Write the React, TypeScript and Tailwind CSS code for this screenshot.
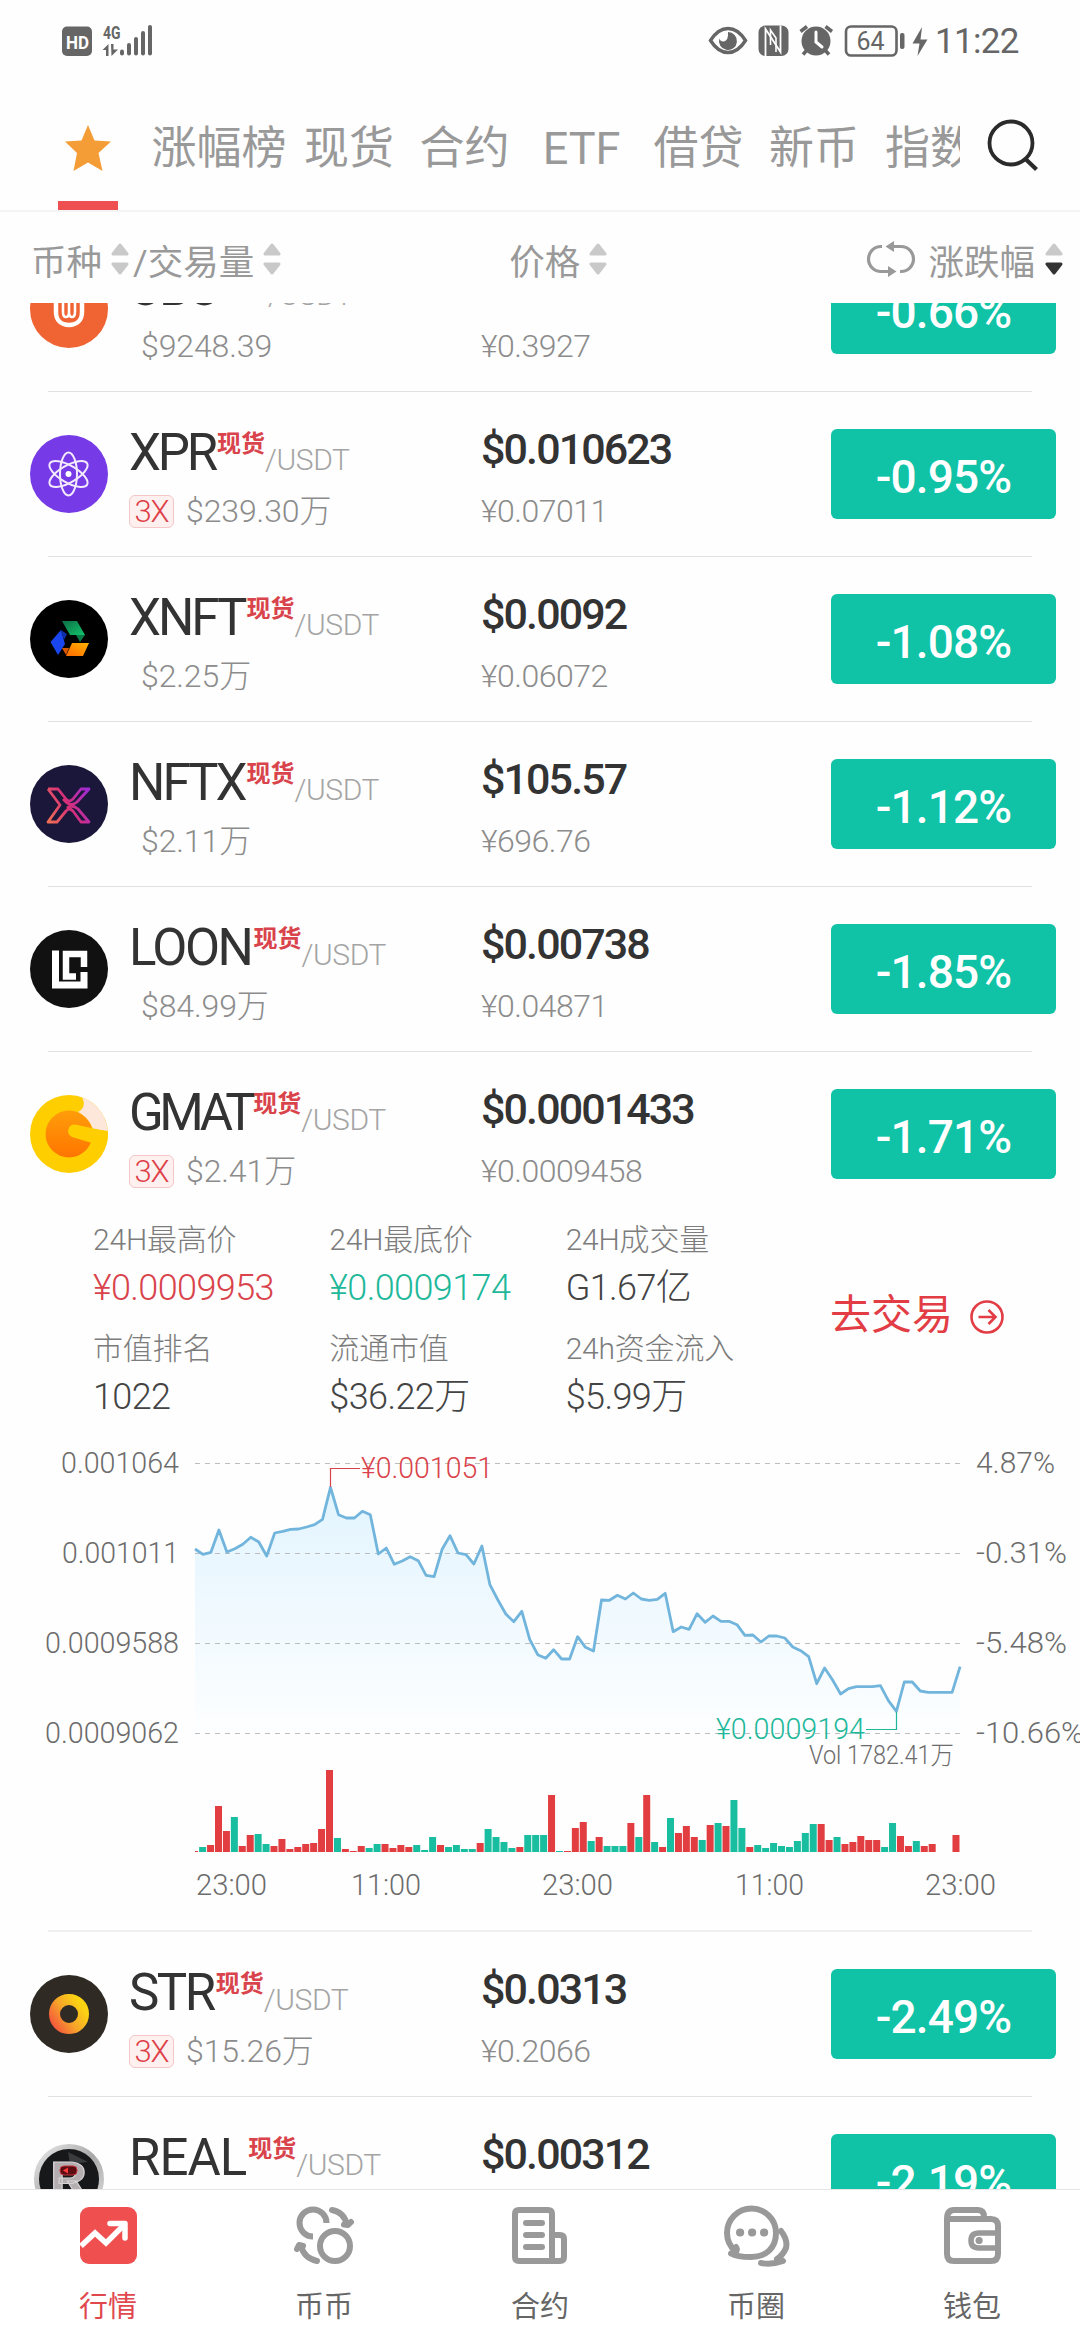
import type { ReactNode } from "react";

const coins = [
  { name: "UBU", fit: "tracking-[-3px]", logo: "ubu", vol: "$9248.39", price: "$0.0581", cny: "¥0.3927", change: "-0.66%" },
  { name: "XPR", fit: "tracking-[-3.2px]", logo: "xpr", lever: true, vol: "$239.30万", price: "$0.010623", cny: "¥0.07011", change: "-0.95%" },
  { name: "XNFT", fit: "tracking-[-3px]", logo: "xnft", vol: "$2.25万", price: "$0.0092", cny: "¥0.06072", change: "-1.08%" },
  { name: "NFTX", fit: "tracking-[-3px]", logo: "nftx", vol: "$2.11万", price: "$105.57", cny: "¥696.76", change: "-1.12%" },
  { name: "LOON", fit: "tracking-[-2.5px]", logo: "loon", vol: "$84.99万", price: "$0.00738", cny: "¥0.04871", change: "-1.85%" },
  { name: "GMAT", fit: "tracking-[-4.5px]", logo: "gmat", lever: true, open: true, vol: "$2.41万", price: "$0.0001433", cny: "¥0.0009458", change: "-1.71%" },
  { name: "STR", fit: "tracking-[-2.5px]", logo: "str", lever: true, vol: "$15.26万", price: "$0.0313", cny: "¥0.2066", change: "-2.49%" },
  { name: "REAL", fit: "tracking-[-1px]", logo: "real", vol: "$1.08万", price: "$0.00312", cny: "¥0.0206", change: "-2.19%" },
];

const stats = [
  { label: "24H最高价", value: "¥0.0009953", color: "text-[#d9434b]" },
  { label: "24H最底价", value: "¥0.0009174", color: "text-[#1fb89a]" },
  { label: "24H成交量", value: "G1.67亿", color: "text-[#444]" },
  { label: "市值排名", value: "1022", color: "text-[#444]" },
  { label: "流通市值", value: "$36.22万", color: "text-[#444]" },
  { label: "24h资金流入", value: "$5.99万", color: "text-[#444]" },
];

// distance of each price point below the top of the chart, in thirds of a pixel
const prices = [
  357, 373, 367, 300, 366, 356, 343, 322, 336, 378, 309, 304, 298, 297, 291, 284, 268, 172, 254, 264, 264, 244, 254, 372,
  354, 403, 393, 380, 392, 436, 440, 358, 317, 369, 374, 402, 348, 464, 510, 552, 575, 544, 628, 674, 685, 659, 687, 687,
  620, 652, 663, 510, 511, 496, 507, 489, 507, 511, 508, 490, 605, 591, 598, 551, 577, 558, 574, 574, 584, 616, 615, 636,
  618, 618, 624, 651, 662, 680, 761, 714, 750, 792, 776, 770, 770, 770, 767, 812, 844, 756, 756, 783, 787, 787, 787, 787,
  710,
];

// r = up, g = down, number is the height of the bar
const volumes =
  "r1 g5 r7 r46 r21 g35 r6 r17 g18 g8 r6 r13 r3 r5 r8 r9 r23 r82 g14 r3 r1 r6 g4 g8 r8 r4 r7 r5 g7 g2 g15 r7 g5 g7 g3 g3 r9 g23 g15 g10 g4 r5 g17 g17 g17 r57 g1 r1 r24 r30 g11 r15 g6 g6 g6 r29 g15 r57 g10 r5 g34 r19 r26 r15 g12 r27 g29 r26 g52 g24 r5 g7 g4 g9 g6 g5 g11 g19 g28 r28 r12 g15 r8 r10 r16 r12 r12 g5 g29 r16 r6 g11 r6 r8 r0 r0 r17".split(
    " "
  );

const gridRows = [
  { y: 1463.5, left: "0.001064", lw: 118, right: "4.87%", rw: 79 },
  { y: 1553.5, left: "0.001011", lw: 117, right: "-0.31%", rw: 91 },
  { y: 1643.5, left: "0.0009588", lw: 134, right: "-5.48%", rw: 91 },
  { y: 1733.5, left: "0.0009062", lw: 134, right: "-10.66%", rw: 108 },
];

const times = [
  { x: 196, w: 71, t: "23:00" },
  { x: 351, w: 70, t: "11:00" },
  { x: 542, w: 71, t: "23:00" },
  { x: 735, w: 69, t: "11:00" },
  { x: 925, w: 71, t: "23:00" },
];

function Logo({ kind }: { kind: string }) {
  const art: Record<string, ReactNode> = {
    ubu: (
      <>
        <circle cx="39" cy="39" r="39" fill="#ef6432" />
        <g fill="none" stroke="#fff">
          <path d="M26 18V42C26 50 31 55 39 55S52 50 52 42V18" strokeWidth="4.5" />
          <path d="M33 18V42Q33 47 36 47T39 42V18M39 42Q39 47 42 47T45 42V18" strokeWidth="2.6" />
        </g>
      </>
    ),
    xpr: (
      <>
        <circle cx="39" cy="39" r="39" fill="#763be6" />
        <g fill="none" stroke="#f3eafd" strokeWidth="2">
          <ellipse cx="38.5" cy="39" rx="8.5" ry="21.5" />
          <ellipse cx="38.5" cy="39" rx="8.5" ry="21.5" transform="rotate(60 38.5 39)" />
          <ellipse cx="38.5" cy="39" rx="8.5" ry="21.5" transform="rotate(-60 38.5 39)" />
        </g>
        <circle cx="38.5" cy="39" r="3" fill="#fff" />
      </>
    ),
    xnft: (
      <>
        <defs>
          <linearGradient id="xg" x1="0" y1="0" x2="1" y2="1">
            <stop offset="0" stopColor="#0d6e45" />
            <stop offset="1" stopColor="#12c46c" />
          </linearGradient>
          <linearGradient id="xo" x1="1" y1="0" x2="0" y2="1">
            <stop offset="0" stopColor="#ffb300" />
            <stop offset="1" stopColor="#ff6a00" />
          </linearGradient>
        </defs>
        <circle cx="39" cy="39" r="39" fill="#000" />
        <path d="M32 21H47L55 35H40Z" fill="url(#xg)" />
        <path d="M46 35H55L50 42Z" fill="#0a7a46" />
        <path d="M20.5 42L31 30L35 44L28 55Z" fill="#1a46f0" />
        <path d="M31 30L37 34L34 40Z" fill="#0d2fa8" />
        <path d="M42 43H59L53 56H36Z" fill="url(#xo)" />
        <path d="M32 48H39L36 55Z" fill="#d95700" />
      </>
    ),
    nftx: (
      <>
        <defs>
          <linearGradient id="nx" x1="17" y1="50" x2="59" y2="30" gradientUnits="userSpaceOnUse">
            <stop offset="0" stopColor="#ef6c55" />
            <stop offset=".5" stopColor="#d62f78" />
            <stop offset="1" stopColor="#a22bd0" />
          </linearGradient>
        </defs>
        <circle cx="39" cy="39" r="39" fill="#1b173b" />
        <path
          d="M18 24H28L36 34Q39 38 43 34L51 24H59L47 37Q41 42 36 37L33 34M18 24L30 40L18 57H27L36 46Q39 42 43 46L51 57H59L48 44Q42 39 37 43"
          fill="none"
          stroke="url(#nx)"
          strokeWidth="2.8"
          strokeLinejoin="round"
        />
      </>
    ),
    loon: (
      <>
        <circle cx="39" cy="39" r="39" fill="#111" />
        <path d="M25.5 20.5V55H54V42" fill="none" stroke="#fff" strokeWidth="7" />
        <path d="M46 46.5H36V24H54V37" fill="none" stroke="#fff" strokeWidth="6.5" />
      </>
    ),
    gmat: (
      <>
        <defs>
          <linearGradient id="gm" x1="0" y1="0" x2="0" y2="1">
            <stop offset="0" stopColor="#ff9d0a" />
            <stop offset="1" stopColor="#ff7500" />
          </linearGradient>
        </defs>
        <circle cx="39" cy="39" r="39" fill="#ffce00" />
        <path d="M52 2.2A39 39 0 0 1 77.7 36L63 34Q59 23 48 17Q57 12 52 2.2Z" fill="#fde6da" />
        <circle cx="39" cy="39" r="23.5" fill="url(#gm)" />
        <path d="M45 29.5L77.8 36.5Q78.5 44 76 51L62 48L42 42Q37 39 38.5 34T45 29.5Z" fill="#ffce00" />
      </>
    ),
    str: (
      <>
        <defs>
          <linearGradient id="st" x1="0" y1="1" x2="1" y2=".3">
            <stop offset="0" stopColor="#f4573c" />
            <stop offset=".5" stopColor="#f7a32a" />
            <stop offset="1" stopColor="#fbd313" />
          </linearGradient>
        </defs>
        <circle cx="39" cy="39" r="39" fill="#2f2a24" />
        <circle cx="39" cy="39" r="14.5" fill="none" stroke="url(#st)" strokeWidth="11" />
      </>
    ),
    real: (
      <>
        <defs>
          <linearGradient id="rl" x1="0" y1="0" x2="1" y2="1">
            <stop offset="0" stopColor="#e9e9e9" />
            <stop offset=".5" stopColor="#a8a8a8" />
            <stop offset="1" stopColor="#dedede" />
          </linearGradient>
        </defs>
        <circle cx="39" cy="39" r="32.5" fill="#171819" stroke="url(#rl)" strokeWidth="5" />
        <path d="M38 12L58 22L40 24Z" fill="#3a3b3d" />
        <text x="20" y="56" fontSize="48" fontWeight="700" fill="#b4aeb0" stroke="#d8d4d5" textLength="37" lengthAdjust="spacingAndGlyphs">
          R
        </text>
        <rect x="30" y="26" width="17" height="9" rx="4" fill="#5b0d12" stroke="#c4343b" />
        <path d="M33 30.5L38 27.5V33.5Z" fill="#ff3b3b" />
      </>
    ),
  };

  return (
    <svg viewBox="0 0 78 78" className="mt-[43px] ml-[30px] size-[78px] shrink-0">
      {art[kind]}
    </svg>
  );
}

function Sort({ active }: { active?: boolean }) {
  return (
    <svg viewBox="0 0 18 34" className="h-[34px] w-[18px] shrink-0" strokeLinejoin="round" strokeWidth="3">
      <path d="M9 3L16 12H2Z" fill="#c9c9c9" stroke="#c9c9c9" />
      <path d="M2 22H16L9 31Z" fill={active ? "#333" : "#c9c9c9"} stroke={active ? "#333" : "#c9c9c9"} />
    </svg>
  );
}

function StatusBar() {
  return (
    <div className="flex h-[82px] items-center pl-[62px] text-[#666]">
      <svg viewBox="62 20 92 42" className="h-[42px] w-[92px]" fill="currentColor">
        <rect x="62" y="26.5" width="30" height="29.5" rx="5" />
        <text x="66" y="48.5" fontSize="19" fontWeight="700" fill="#fff" textLength="23" lengthAdjust="spacingAndGlyphs">
          HD
        </text>
        <text x="103" y="38.5" fontSize="18.5" fontWeight="700" textLength="17.5" lengthAdjust="spacingAndGlyphs">
          4G
        </text>
        <path d="M102.5 50L108.5 44V56H106V50ZM111 44H113.5V49.5H118L111.5 56Z" />
        <rect x="120" y="49.5" width="4" height="6" rx="2" />
        <rect x="127" y="43" width="4" height="12.5" rx="2" />
        <rect x="134" y="37" width="4" height="18.5" rx="2" />
        <rect x="141" y="31" width="4" height="24.5" rx="2" />
        <rect x="148" y="25" width="4" height="30.5" rx="2" />
      </svg>
      <svg viewBox="706 20 226 42" className="ml-[553px] h-[42px] w-[226px]" fill="currentColor">
        <path d="M709.5 40.5Q717 28.5 727 28.5T744.5 40.5Q737 52.5 727 52.5T709.5 40.5Z" fill="none" stroke="currentColor" strokeWidth="3.4" />
        <path d="M727 32A9 9 0 1 1 718.3 38.5Q719.5 42 723 41.5Q727.5 40.5 727 32Z" />
        <rect x="757.5" y="25.5" width="30" height="30.5" rx="7" />
        <path d="M764.5 56V29L779.5 52V25.5" fill="none" stroke="#fff" strokeWidth="1.8" />
        <path d="M769.5 45V30L775 38V52" fill="none" stroke="#fff" strokeWidth="1.6" />
        <circle cx="815" cy="41" r="14.5" />
        <path d="M799.5 31.5L806 26.5M824.5 26.5L831 31.5M806 50L802 54.500M824 50L828 54.500" stroke="currentColor" strokeWidth="3.5" />
        <path d="M815 32V42L821 47" fill="none" stroke="#fff" strokeWidth="3" strokeLinecap="round" />
        <rect x="845" y="26.5" width="50.5" height="29" rx="5" fill="none" stroke="currentColor" strokeWidth="2.6" />
        <rect x="899" y="33" width="4.5" height="16" rx="2" />
        <text x="855.5" y="50" fontSize="26" textLength="28" lengthAdjust="spacingAndGlyphs">
          64
        </text>
        <path d="M921 27L911.500 43.5H918.5L916.5 56L926.500 39.5H919.5Z" />
      </svg>
      <span className="ml-0.5 pt-0.5 text-[35px] leading-[42px] tracking-[-0.7px]">11:22</span>
    </div>
  );
}

function Tabs() {
  return (
    <div className="flex h-[130px] border-b-2 border-[#f4f4f4] text-[45px] leading-[134px] text-[#999]">
      <div className="flex w-[960px] overflow-hidden whitespace-nowrap">
        <div className="ml-[58px] flex w-[60px] shrink-0 flex-col items-center justify-between">
          <svg viewBox="0 0 46 47" className="mt-[42px] h-[47px] w-[46px]" fill="#f49d37">
            <path d="M23 1L29.5 16.5L46 17.5L33.5 29L37.5 47L23 38.5L8.5 47L12 29L0 17.5L16.5 16.5Z" />
          </svg>
          <div className="h-[9px] w-full bg-[#ee4f50]" />
        </div>
        <div className="ml-[29px] w-36 shrink-0 text-center">涨幅榜</div>
        <div className="w-[116px] shrink-0 text-center">现货</div>
        <div className="w-[115px] shrink-0 text-center">合约</div>
        <div className="w-[119px] shrink-0 text-center">ETF</div>
        <div className="w-[115px] shrink-0 text-center">借贷</div>
        <div className="w-[116px] shrink-0 text-center">新币</div>
        <div className="w-[116px] shrink-0 text-center">指数</div>
      </div>
      <svg viewBox="0 0 54 54" className="mt-[36px] ml-[26px] size-[54px]" fill="none" stroke="#2b2b2b" strokeWidth="3.8">
        <circle cx="25" cy="25" r="21.5" />
        <path d="M39 40.5L50.5 51.5" strokeWidth="4.200" />
      </svg>
    </div>
  );
}

function ColumnHeader() {
  return (
    <div className="flex h-[91px] items-start pt-5 pl-[31px] text-[35.5px] leading-[62px] text-[#999]">
      <span>币种</span>
      <span className="mt-[10px] ml-[9px]">
        <Sort />
      </span>
      <span className="ml-1">/交易量</span>
      <span className="mt-[10px] ml-[9px]">
        <Sort />
      </span>
      <span className="ml-[228px]">价格</span>
      <span className="mt-[10px] ml-[9px]">
        <Sort />
      </span>
      <div className="mr-[17px] ml-auto flex items-start">
        <svg viewBox="0 0 50 38" className="mt-[8px] mr-3 h-[38px] w-[50px]" fill="none" stroke="#999" strokeWidth="3.200">
          <path d="M16 6.5H15A12.5 12.5 0 0 0 15 31.5H26M34 31.5H35A12.5 12.5 0 0 0 35 6.5H24" />
          <path d="M19.5 6.5L28 1V12ZM30.5 31.5L22 26V37Z" fill="#999" stroke="none" />
        </svg>
        <span className="mr-2.5">涨跌幅</span>
        <span className="mt-[10px]">
          <Sort active />
        </span>
      </div>
    </div>
  );
}

function Chart() {
  const points = prices.map((p, i) => `${(195 + i * 7.97).toFixed(1)},${(1430 + p / 3).toFixed(1)}`).join(" ");

  return (
    <svg viewBox="0 1420 1080 510" className="block h-[510px] w-[1080px]" fontSize="30" fontWeight="300" fill="#6c6c6c">
      <defs>
        <linearGradient id="area" x1="0" y1="1487" x2="0" y2="1733" gradientUnits="userSpaceOnUse">
          <stop offset="0" stopColor="#e2f4fe" />
          <stop offset="1" stopColor="#fdfeff" />
        </linearGradient>
      </defs>
      <polygon points={`195,1733 ${points} 960,1733`} fill="url(#area)" />
      {gridRows.map((g) => (
        <g key={g.left}>
          <path d={`M195 ${g.y}H960`} stroke="#bdbdbd" strokeWidth="1" strokeDasharray="5 5" />
          <text x={179 - g.lw} y={g.y + 9} textLength={g.lw} lengthAdjust="spacingAndGlyphs">
            {g.left}
          </text>
          <text x="976" y={g.y + 9} textLength={g.rw} lengthAdjust="spacingAndGlyphs">
            {g.right}
          </text>
        </g>
      ))}
      <polyline points={points} fill="none" stroke="#72b5dc" strokeWidth="2.8" strokeLinejoin="round" />
      <path d="M330.5 1487V1468.5H360" fill="none" stroke="#d9434b" strokeWidth="1.2" />
      <text x="361" y="1478" fill="#d9434b" textLength="132" lengthAdjust="spacingAndGlyphs">
        ¥0.001051
      </text>
      <path d="M896.5 1712V1729.5H866" fill="none" stroke="#1fb89a" strokeWidth="1.2" />
      <text x="716" y="1738.5" fill="#1fb89a" textLength="149" lengthAdjust="spacingAndGlyphs">
        ¥0.0009194
      </text>
      <text x="809" y="1764" fontSize="25" textLength="145" lengthAdjust="spacingAndGlyphs">
        Vol 1782.41万
      </text>
      {volumes.map((v, i) => {
        const h = Number(v.slice(1));
        return (
          <rect
            key={i}
            x={i === 0 ? 195 : 191.2 + i * 7.93}
            y={1852 - h}
            width={i === 0 ? 3 : 7}
            height={h}
            fill={v[0] === "r" ? "#e23d40" : "#19bd9f"}
          />
        );
      })}
      {times.map((t) => (
        <text key={t.x} x={t.x} y="1894.5" textLength={t.w} lengthAdjust="spacingAndGlyphs">
          {t.t}
        </text>
      ))}
    </svg>
  );
}

function Detail() {
  return (
    <div>
      <div className="flex h-[204px] pt-1 pl-[93px]">
        <div className="grid w-[709px] grid-cols-3 content-start gap-y-[19px]">
          {stats.map((s) => (
            <div key={s.label} className="whitespace-nowrap">
              <div className="text-[30px] leading-10 font-light tracking-[-0.2px] text-[#7c7c7c]">{s.label}</div>
              <div className={`mt-1.5 text-4xl leading-[44px] font-light tracking-[-0.6px] ${s.color}`}>{s.value}</div>
            </div>
          ))}
        </div>
        <div className="ml-[28px] flex h-[192px] items-center text-[41px] text-[#e23d45]">
          去交易
          <svg viewBox="0 0 36 36" className="mt-0.5 ml-[16px] size-9" fill="none" stroke="currentColor" strokeWidth="2.6">
            <circle cx="18" cy="18" r="15.5" />
            <path d="M9.5 18H26M19.5 11L26.5 18L19.5 25" />
          </svg>
        </div>
      </div>
      <Chart />
      <div className="mr-12 ml-12 h-0.5 bg-[#efefef]" />
    </div>
  );
}

function CoinRow({ coin }: { coin: (typeof coins)[number] }) {
  return (
    <>
      <div className="flex h-[164px] items-start whitespace-nowrap">
        <Logo kind={coin.logo} />
        <div className="ml-[21px] w-[352px] shrink-0 pt-[31px]">
          <div className="flex h-[60px] items-start">
            <span className={`pr-0.5 text-[51px] leading-[60px] text-[#333] ${coin.fit}`}>{coin.name}</span>
            <span className="mt-[9px] text-2xl leading-6 font-bold text-[#d9434b]">现货</span>
            <span className="pt-[7px] text-[30px] leading-[60px] font-light tracking-[-0.4px] text-[#a4a4a4]">/USDT</span>
          </div>
          <div className="mt-2 flex h-10 items-center">
            {coin.lever && (
              <span className="h-[33px] w-[45px] rounded-md border border-[#f3c6c8] bg-[#fdf0ef] text-center text-[31px] leading-[31px] font-light tracking-[-1px] text-[#dd4048]">
                3X
              </span>
            )}
            <span className="ml-3 text-[32px] leading-10 font-light tracking-[-0.1px] text-[#8c8c8c]">{coin.vol}</span>
          </div>
        </div>
        <div className="w-[350px] shrink-0 pt-8">
          <div className="text-[43px] leading-[50px] font-medium tracking-[-1.9px] text-[#333]">{coin.price}</div>
          <div className="mt-[17px] text-[32px] leading-10 font-light tracking-[-0.5px] text-[#8c8c8c]">{coin.cny}</div>
        </div>
        <div className="mt-[37px] h-[90px] w-[225px] shrink-0 rounded-md bg-[#10c2a6] pt-0.5 text-center text-[46px] leading-[92px] font-medium tracking-[-0.9px] text-white">
          {coin.change}
        </div>
      </div>
      {coin.open ? <Detail /> : <div className="mx-12 h-px bg-[#e1e1e1]" />}
    </>
  );
}

function NavItem({ label, active, children }: { label: string; active?: boolean; children: ReactNode }) {
  return (
    <div className={`flex flex-1 flex-col items-center pt-[13px] ${active ? "text-[#e0484e]" : "text-[#666]"}`}>
      <svg viewBox="0 0 68 64" className="h-16 w-[68px]" fill="none" stroke="#999" strokeWidth="6" strokeLinecap="round" strokeLinejoin="round">
        {children}
      </svg>
      <span className="mt-5 text-[29px] leading-10">{label}</span>
    </div>
  );
}

function BottomNav() {
  return (
    <div className="flex h-[151px] border-t border-[#e6e6e6] bg-white">
      <NavItem label="行情" active>
        <rect x="6" y="4" width="57" height="57" rx="9" fill="#f04f50" stroke="none" />
        <path d="M7 43L21 30L32 40L51 21" stroke="#fff" strokeWidth="5.5" strokeLinecap="butt" strokeLinejoin="miter" />
        <path d="M36 20.5H51V35" stroke="#fff" strokeWidth="5.5" />
      </NavItem>
      <NavItem label="币币">
        <circle cx="45" cy="43" r="15" />
        <path d="M23 33.5A13.5 13.5 0 1 1 36.5 20" strokeLinecap="butt" />
        <path d="M42 7Q54 9 57 22M54 21.500L58 22L61 19M27 58Q14 55 11 43M7 46L9 42L13 43" />
      </NavItem>
      <NavItem label="合约">
        <path d="M13 7H42Q46 7 46 11V58H13Q9 58 9 54V11Q9 7 13 7ZM46 32H54Q58 32 58 36V54Q58 58 54 58H44" />
        <path d="M20 20H36M20 32H36M20 44H36" />
      </NavItem>
      <NavItem label="币圈">
        <path d="M14 49Q5 41 5 30A24.5 24.5 0 1 1 54 30C54 45 44 54 29 54Q15 54 9 50.5Q17 49 14 44" />
        <path d="M59 28Q66 37 64 45Q61 52 55 56Q60 57 61 58Q50 62 39 60" />
        <path d="M18 29.5H18.2M30 29.5H30.2M42 29.5H42.2" strokeWidth="8" />
      </NavItem>
      <NavItem label="钱包">
        <path d="M9 16V51Q9 58 16 58H53Q60 58 60 51V23Q60 16 53 16H9Q9 7 16 7H40Q46 7 46 14" />
        <path d="M59 30H41Q33 30 33 37.5T41 45H59" strokeWidth="5.5" />
        <path d="M41 37.5H41.2" strokeWidth="7" />
      </NavItem>
    </div>
  );
}

export default function App() {
  return (
    <div className="flex h-[2340px] w-[1080px] flex-col overflow-hidden bg-[#fefefe] font-['Roboto','Noto_Sans_CJK_SC',sans-serif]">
      <StatusBar />
      <Tabs />
      <ColumnHeader />
      <div className="min-h-0 flex-1 overflow-hidden">
        <div className="-mt-[76px]">
          {coins.map((coin) => (
            <CoinRow key={coin.name} coin={coin} />
          ))}
        </div>
      </div>
      <BottomNav />
    </div>
  );
}
